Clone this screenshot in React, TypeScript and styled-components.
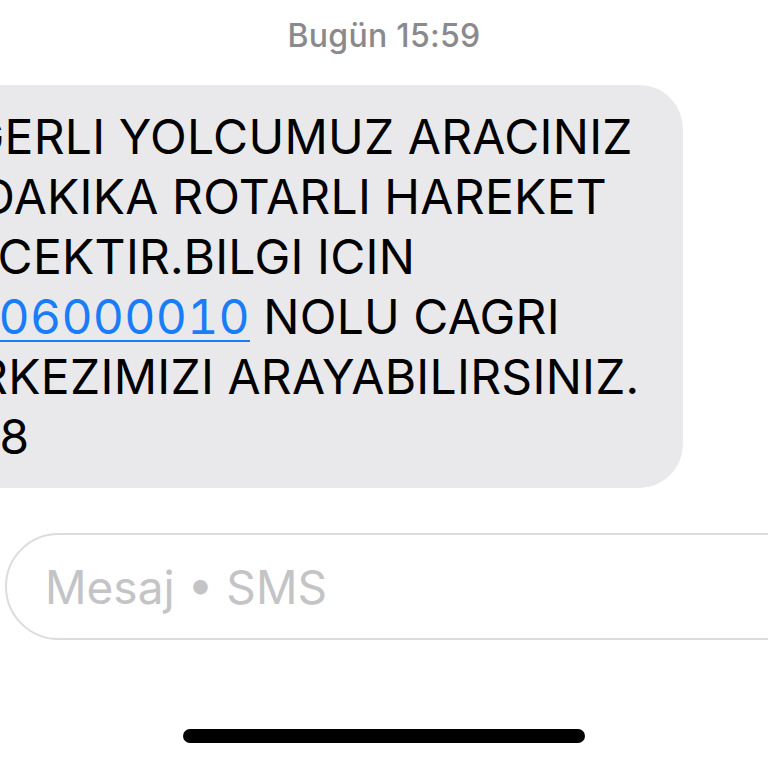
import React, { FC } from "react";
import styled, { createGlobalStyle } from "styled-components";

const GlobalStyle = createGlobalStyle`
  html, body {
    margin: 0;
    padding: 0;
    background: #fff;
  }
  body {
    font-family: Inter, "Liberation Sans", Arial, sans-serif;
    -webkit-font-smoothing: antialiased;
  }
`;

const Screen = styled.div`
  display: flex;
  flex-direction: column;
  width: 768px;
  height: 768px;
  overflow: hidden;
  background: #fff;
`;

const Timestamp = styled.div`
  padding-top: 16px;
  height: 44px;
  text-align: center;
  font-size: 32px;
  font-weight: 500;
  color: #8a8a8e;
  letter-spacing: 0.3px;
`;

// bubble is pinned to the right; its left side runs off the screen
const MessageRow = styled.div`
  display: flex;
  justify-content: flex-end;
  margin-top: 25px;
  padding-right: 85px;
  overflow: hidden;
`;

const Bubble = styled.div`
  flex: none;
  padding: 22px 44px 21px 44px;
  background: #e9e9eb;
  border-radius: 44px;
  color: #000;
  font-size: 48px;
  line-height: 60px;
  letter-spacing: 0.3px;
  font-variant-numeric: tabular-nums;
`;

const MessageLine = styled.div`
  white-space: pre;
`;

const PhoneLink = styled.span`
  color: #1a7df8;
  text-decoration: underline;
  text-decoration-thickness: 2px;
  text-underline-offset: 6px;
`;

const Composer = styled.div`
  display: flex;
  align-items: center;
  margin: 45px -60px 0 5px;
  height: 103px;
  padding-left: 38px;
  border: 2px solid #dcdcde;
  border-radius: 54px;
  font-size: 46px;
  color: #c4c4c7;
`;

const HomeIndicator = styled.div`
  width: 402px;
  height: 14px;
  margin: 89px auto 0;
  border-radius: 7px;
  background: #000;
`;

const lines: React.ReactNode[] = [
  "DEGERLI YOLCUMUZ ARACINIZ",
  "30 DAKIKA ROTARLI HAREKET",
  "EDECEKTIR.BILGI ICIN",
  <>
    <PhoneLink>08506000010</PhoneLink> NOLU CAGRI
  </>,
  "MERKEZIMIZI ARAYABILIRSINIZ.",
  "B028",
];

const App: FC = () => {
  return (
    <Screen>
      <GlobalStyle />
      <Timestamp>Bugün 15:59</Timestamp>

      <MessageRow>
        <Bubble>
          {lines.map((line, i) => (
            <MessageLine key={i}>{line}</MessageLine>
          ))}
        </Bubble>
      </MessageRow>

      <Composer>Mesaj • SMS</Composer>

      <HomeIndicator />
    </Screen>
  );
};

export default App;
